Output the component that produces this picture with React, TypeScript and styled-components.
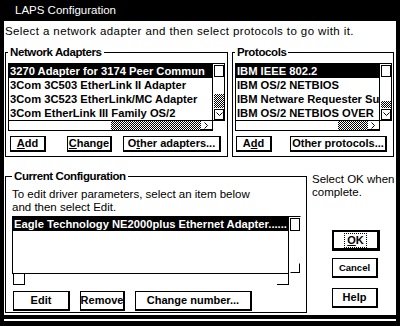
import React from "react";
import styled, { createGlobalStyle } from "styled-components";

const Global = createGlobalStyle`
  html, body { margin: 0; padding: 0; background: #fff; }
  body { font-family: "Liberation Sans", Arial, sans-serif; color: #000; }
  * { box-sizing: border-box; }
`;

const Window = styled.div`
  width: 400px;
  height: 326px;
  background: #fff;
  border-style: solid;
  border-color: #000;
  border-width: 0 4px 5px 4px;
  padding-bottom: 2px;
  display: flex;
  flex-direction: column;
`;

const TitleBar = styled.div`
  height: 21px;
  flex: none;
  background: #000;
  color: #fff;
  font-size: 11.5px;
  line-height: 21px;
  padding-left: 11px;
  white-space: nowrap;
`;

const Body = styled.div`
  flex: 1;
  min-height: 0;
  background: #fff;
  border-bottom: 4px solid #000;
  padding: 0 2px 0 1px;
  overflow: hidden;
  display: flex;
  flex-direction: column;
`;

const Instruction = styled.div`
  margin-top: 4px;
  font-size: 11.5px;
  letter-spacing: 0.4px;
  line-height: 13px;
  white-space: nowrap;
`;

const Row = styled.div<{ $mt: number; $gap: number }>`
  display: flex;
  align-items: flex-start;
  margin-top: ${(p) => p.$mt}px;
  gap: ${(p) => p.$gap}px;
`;

const Group = styled.fieldset<{ $w?: number; $pad: string }>`
  margin: 0;
  min-width: 0;
  border: 1px solid #000;
  padding: ${(p) => p.$pad};
  ${(p) => (p.$w ? `width: ${p.$w}px; flex: none;` : "flex: 1;")}
  display: flex;
  flex-direction: column;
`;

const Legend = styled.legend`
  padding: 0 2px;
  margin-left: 0;
  font-size: 11.5px;
  font-weight: bold;
  letter-spacing: -0.4px;
  line-height: 12px;
  white-space: nowrap;
`;

const ListFrame = styled.div<{ $hs: number }>`
  display: grid;
  grid-template-columns: 1fr 12px;
  grid-template-rows: 58px ${(p) => p.$hs}px;
`;

const ListBody = styled.ul`
  margin: 0;
  padding: 0;
  list-style: none;
  border: 1px solid #000;
  overflow: hidden;
`;

const Item = styled.li<{ $sel?: boolean }>`
  height: 14px;
  line-height: 14px;
  padding-left: 1px;
  font-size: 11.2px;
  font-weight: bold;
  white-space: nowrap;
  overflow: hidden;
  background: ${(p) => (p.$sel ? "#000" : "#fff")};
  color: ${(p) => (p.$sel ? "#fff" : "#000")};
`;

const VScroll = styled.div<{ $edge: boolean }>`
  display: flex;
  flex-direction: column;
  border-top: 1px solid #000;
  border-bottom: 1px solid ${(p) => (p.$edge ? "#000" : "transparent")};
  border-right: 1px solid ${(p) => (p.$edge ? "#000" : "transparent")};
`;

const ArrowBox = styled.div<{ $h: number; $open?: boolean }>`
  height: ${(p) => p.$h}px;
  flex: none;
  border: 1px solid #000;
  ${(p) => (p.$open ? "border-top-color: transparent; border-left-color: transparent;" : "")}
  margin: 1px 0 0 1px;
  display: flex;
  align-items: center;
  justify-content: center;
`;

const Track = styled.div<{ $dir: "row" | "column" }>`
  flex: 1;
  display: flex;
  flex-direction: ${(p) => p.$dir};
  justify-content: flex-end;
`;

const Dither = styled.div<{ $w?: number; $h?: number; $inset?: boolean }>`
  ${(p) => (p.$w ? `width: ${p.$w}px;` : "")}
  ${(p) => (p.$h ? `height: ${p.$h}px;` : "")}
  ${(p) => (p.$inset ? "margin-left: 1px;" : "")}
  flex: none;
  background-image: repeating-conic-gradient(#000 0% 25%, #fff 0% 50%);
  background-size: 2px 2px;
`;

const HScroll = styled.div<{ $edge: boolean }>`
  display: flex;
  align-items: stretch;
  border-left: 1px solid ${(p) => (p.$edge ? "#000" : "transparent")};
  border-bottom: 1px solid ${(p) => (p.$edge ? "#000" : "transparent")};
`;

const HArrow = styled.div<{ $w: number; $side?: "l" | "r" }>`
  width: ${(p) => p.$w}px;
  flex: none;
  border-right: 1px solid #000;
  border-bottom: 1px solid #000;
  ${(p) => (p.$side === "l" ? "border-left: 1px solid #000;" : "")}
  display: flex;
  align-items: center;
  justify-content: center;
`;

const Buttons = styled.div<{ $mt: number; $pl: number }>`
  display: flex;
  margin-top: ${(p) => p.$mt}px;
  padding-left: ${(p) => p.$pl}px;
`;

const Btn = styled.button<{ $w: number; $h: number; $ml?: number; $mt?: number; $def?: boolean; $fs?: number }>`
  width: ${(p) => p.$w}px;
  height: ${(p) => p.$h}px;
  margin: ${(p) => p.$mt ?? 0}px 0 0 ${(p) => p.$ml ?? 0}px;
  flex: none;
  padding: 0;
  background: #fff;
  color: #000;
  border-style: solid;
  border-color: #000;
  border-width: ${(p) => (p.$def ? "2px 3px 3px 2px" : "1px 2px 2px 1px")};
  font-family: "Liberation Sans", Arial, sans-serif;
  font-size: ${(p) => p.$fs ?? 11}px;
  font-weight: bold;
  line-height: 1;
  white-space: nowrap;
  display: flex;
  align-items: center;
  justify-content: center;
`;

const Focus = styled.span`
  outline: 1px dotted #000;
  outline-offset: 1px;
  padding: 0 1px;
`;

const Desc = styled.div`
  font-size: 11.5px;
  line-height: 13px;
  white-space: nowrap;
`;

const SideColumn = styled.div`
  flex: 1;
  display: flex;
  flex-direction: column;
  padding-top: 3px;
`;

const SideButtons = styled.div`
  display: flex;
  flex-direction: column;
  padding-left: 20px;
  margin-top: 31px;
`;

const U = styled.span`
  text-decoration: underline;
  text-underline-offset: 1px;
`;

const DownChevron = () => (
  <svg width="7" height="5" viewBox="0 0 7 5">
    <polyline points="0.5,0.5 3.5,3.5 6.5,0.5" fill="none" stroke="#000" strokeWidth="1" />
  </svg>
);

const RightChevron = () => (
  <svg width="5" height="7" viewBox="0 0 5 7">
    <polyline points="0.5,0.5 3.5,3.5 0.5,6.5" fill="none" stroke="#000" strokeWidth="1" />
  </svg>
);

type ListProps = {
  items: string[];
  vDither: number;
  hDither: number;
};

const ScrollList = ({ items, vDither, hDither }: ListProps) => (
  <ListFrame $hs={10}>
    <ListBody>
      {items.map((t, i) => (
        <Item key={t} $sel={i === 0}>
          {t}
        </Item>
      ))}
    </ListBody>
    <VScroll $edge>
      <ArrowBox $h={12} />
      <Track $dir="column">
        <Dither $h={vDither} $inset />
      </Track>
      <ArrowBox $h={11}>
        <DownChevron />
      </ArrowBox>
    </VScroll>
    <HScroll $edge>
      <Track $dir="row">
        <Dither $w={hDither} />
      </Track>
      <HArrow $w={12}>
        <RightChevron />
      </HArrow>
    </HScroll>
  </ListFrame>
);

export default function App() {
  return (
    <>
      <Global />
      <Window>
        <TitleBar>LAPS Configuration</TitleBar>
        <Body>
          <Instruction>Select a network adapter and then select protocols to go with it.</Instruction>
          <Row $mt={8} $gap={4}>
            <Group $w={223} $pad="5px 2px 4px 2px">
              <Legend>Network Adapters</Legend>
              <ScrollList
                items={[
                  "3270 Adapter for 3174 Peer Commun",
                  "3Com 3C503 EtherLink II Adapter",
                  "3Com 3C523 EtherLink/MC Adapter",
                  "3Com EtherLink III Family OS/2",
                ]}
                vDither={14}
                hDither={90}
              />
              <Buttons $mt={5} $pl={2}>
                <Btn $w={36} $h={16}>
                  <U>A</U>dd
                </Btn>
                <Btn $w={45} $h={16} $ml={21}>
                  <U>C</U>hange
                </Btn>
                <Btn $w={98} $h={16} $ml={11}>
                  O<U>t</U>her adapters...
                </Btn>
              </Buttons>
            </Group>
            <Group $pad="5px 1px 4px 2px">
              <Legend>Protocols</Legend>
              <ScrollList
                items={[
                  "IBM IEEE 802.2",
                  "IBM OS/2 NETBIOS",
                  "IBM Netware Requester Su",
                  "IBM OS/2 NETBIOS OVER",
                ]}
                vDither={7}
                hDither={30}
              />
              <Buttons $mt={5} $pl={1}>
                <Btn $w={36} $h={16}>
                  A<U>d</U>d
                </Btn>
                <Btn $w={97} $h={16} $ml={18}>
                  Other protocols...
                </Btn>
              </Buttons>
            </Group>
          </Row>
          <Row $mt={13} $gap={5}>
            <Group $w={302} $pad="6px 5px 1px 6px">
              <Legend>Current Configuration</Legend>
              <Desc>To edit driver parameters, select an item below</Desc>
              <Desc>and then select Edit.</Desc>
              <ListFrame $hs={12} style={{ marginTop: 2 }}>
                <ListBody>
                  <Item $sel>Eagle Technology NE2000plus Ethernet Adapter......</Item>
                </ListBody>
                <VScroll $edge={false}>
                  <ArrowBox $h={13} />
                  <Track $dir="column" />
                  <ArrowBox $h={10} $open />
                </VScroll>
                <HScroll $edge={false}>
                  <HArrow $w={12} $side="l" />
                  <Track $dir="row" />
                  <HArrow $w={12} />
                </HScroll>
              </ListFrame>
              <Buttons $mt={5} $pl={1}>
                <Btn $w={57} $h={20}>Edit</Btn>
                <Btn $w={45} $h={20} $ml={10}>Remove</Btn>
                <Btn $w={117} $h={20} $ml={10}>Change number...</Btn>
              </Buttons>
            </Group>
            <SideColumn>
              <Desc>Select OK when</Desc>
              <Desc>complete.</Desc>
              <SideButtons>
                <Btn $w={48} $h={21} $def>
                  <Focus>
                    <U>O</U>K
                  </Focus>
                </Btn>
                <Btn $w={46} $h={20} $mt={7} $fs={9.5}>
                  Cancel
                </Btn>
                <Btn $w={46} $h={20} $mt={10}>
                  Help
                </Btn>
              </SideButtons>
            </SideColumn>
          </Row>
        </Body>
      </Window>
    </>
  );
}
